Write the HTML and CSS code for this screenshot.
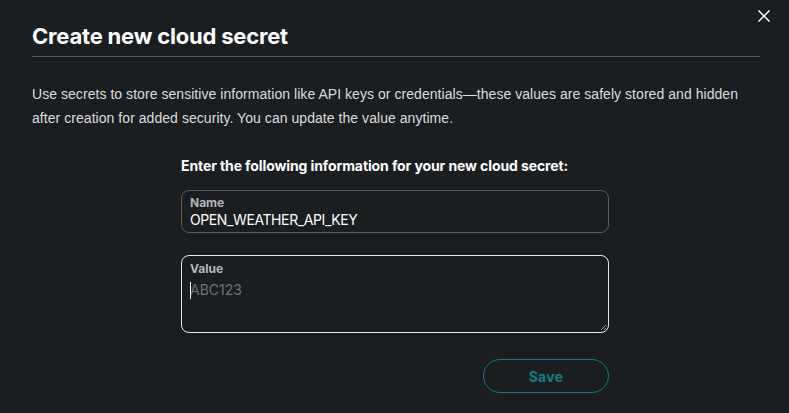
FILE: index.html
```html
<!DOCTYPE html>
<html>
<head>
<meta charset="utf-8">
<link rel="stylesheet" href="styles.css">
</head>
<body>
<div class="modal">
  <button class="close" aria-label="Close">
    <svg width="12" height="12" viewBox="0 0 12 12"><path d="M1 1L11 11M11 1L1 11" stroke="#ffffff" stroke-width="1.5" stroke-linecap="square"/></svg>
  </button>
  <h1 class="title">Create new cloud secret</h1>
  <p class="desc">Use secrets to store sensitive information like API keys or credentials—these values are safely stored and hidden after creation for added security. You can update the value anytime.</p>
  <form class="form">
    <div class="form-head">Enter the following information for your new cloud secret:</div>
    <label class="field">
      <span class="field-label">Name</span>
      <span class="field-value">OPEN_WEATHER_API_KEY</span>
    </label>
    <label class="field field-area">
      <span class="field-label">Value</span>
      <span class="field-placeholder"><span class="caret"></span>ABC123</span>
      <svg class="grip" width="8" height="8" viewBox="0 0 8 8"><path d="M7 2L2 7M7 5L5 7" stroke="#9a9a9a" stroke-width="1"/></svg>
    </label>
    <div class="actions">
      <button type="button" class="save">Save</button>
    </div>
  </form>
</div>
</body>
</html>
```
FILE: styles.css
```css
html, body {
  margin: 0;
  padding: 0;
  background: #1b1e21;
}
body {
  font-family: Inter, "Liberation Sans", sans-serif;
  color: #e6e6e6;
  width: 789px;
  height: 413px;
  overflow: hidden;
}
.modal {
  position: relative;
  padding: 22px 29px 0 32px;
}
.close {
  position: absolute;
  top: 10px;
  right: 19px;
  background: none;
  border: 0;
  padding: 0;
  width: 12px;
  height: 12px;
  display: flex;
}
.title {
  margin: 0;
  font-size: 22px;
  font-weight: 700;
  line-height: 28px;
  color: #ffffff;
  padding-bottom: 6px;
  border-bottom: 1px solid #55585e;
  letter-spacing: -0.2px;
}
.desc {
  margin: 25px 0 0;
  font-family: "Liberation Sans", Arial, sans-serif;
  font-size: 14px;
  line-height: 24px;
  color: #dcdcdc;
  letter-spacing: 0.05px;
}
.form {
  width: 428px;
  margin: 26px 0 0 149px;
  display: flex;
  flex-direction: column;
}
.form-head {
  font-size: 14px;
  font-weight: 700;
  color: #ffffff;
  line-height: 20px;
  letter-spacing: -0.1px;
}
.field {
  margin-top: 14px;
  border: 1px solid #5a5d62;
  border-radius: 8px;
  padding: 4px 8px 3px;
  display: flex;
  flex-direction: column;
  position: relative;
}
.field-label {
  font-size: 12px;
  font-weight: 700;
  color: #b4b6b9;
  line-height: 15px;
}
.field-value {
  font-size: 14px;
  color: #ffffff;
  line-height: 19px;
  letter-spacing: -0.4px;
}
.field-area {
  margin-top: 22px;
  height: 69px;
  padding: 5px 8px 2px;
  border-color: #e6e6e6;
}
.field-placeholder {
  margin-top: 5px;
  font-size: 14px;
  line-height: 18px;
  color: #6e7175;
  display: flex;
  align-items: center;
}
.caret {
  width: 1px;
  height: 17px;
  background: #ffffff;
  margin-right: -1px;
}
.grip {
  position: absolute;
  right: 1px;
  bottom: 1px;
}
.actions {
  display: flex;
  justify-content: flex-end;
  margin-top: 26px;
}
.save {
  width: 126px;
  height: 34px;
  border: 1px solid #0e7c86;
  border-radius: 17px;
  background: transparent;
  color: #0f7f89;
  font-family: inherit;
  font-size: 14px;
  font-weight: 700;
  letter-spacing: 0.3px;
}
```
